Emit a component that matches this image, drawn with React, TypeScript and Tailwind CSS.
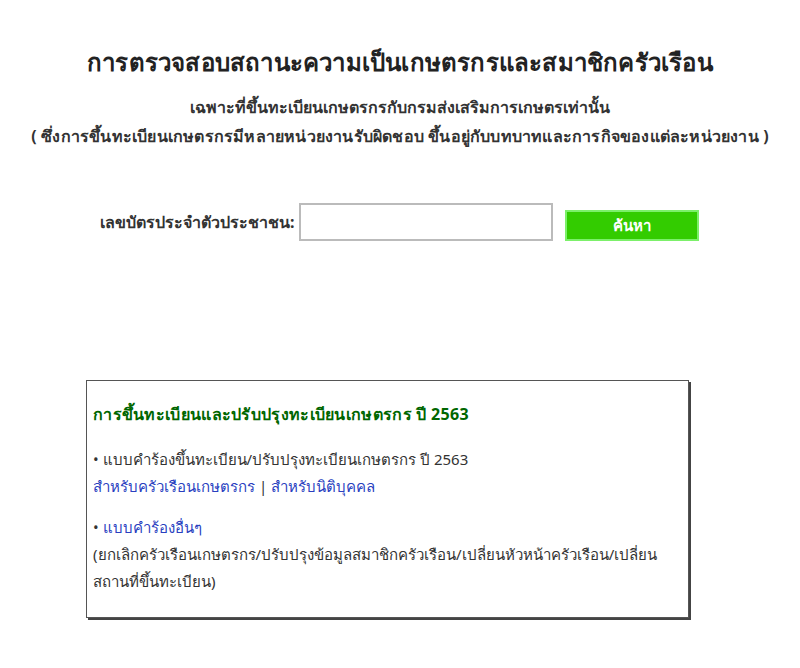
export default function App() {
  return (
    <div className="w-[800px] h-[668px] bg-white text-[#222] font-['Tahoma','Noto_Sans',sans-serif] overflow-hidden">
      <div className="flex flex-col items-center pt-[46px]">
        <h1 className="text-[24px] font-bold leading-[32px] text-[#222] tracking-[0.2px]">
          การตรวจสอบสถานะความเป็นเกษตรกรและสมาชิกครัวเรือน
        </h1>
        <p className="mt-[17px] text-[16px] font-bold leading-[24px] text-[#333]">
          เฉพาะที่ขึ้นทะเบียนเกษตรกรกับกรมส่งเสริมการเกษตรเท่านั้น
        </p>
        <p className="mt-[5px] text-[16px] font-bold leading-[24px] text-[#333] whitespace-nowrap tracking-[0.2px]">
          ( ซึ่งการขึ้นทะเบียนเกษตรกรมีหลายหน่วยงานรับผิดชอบ ขึ้นอยู่กับบทบาทและการกิจของแต่ละหน่วยงาน )
        </p>
      </div>

      <div className="flex items-center mt-[55px] pl-[100px]">
        <span className="text-[16px] font-bold text-[#333] mr-[4px] whitespace-nowrap">เลขบัตรประจำตัวประชาชน:</span>
        <input
          type="text"
          className="w-[254px] h-[38px] border-2 border-[#bbb] bg-white outline-none"
        />
        <button className="ml-[12px] mt-[7px] w-[134px] h-[31px] bg-[#33cc00] border-2 border-[#7cf06a] text-white text-[15px] font-bold leading-none">
          ค้นหา
        </button>
      </div>

      <div className="ml-[86px] mt-[139px] w-[603px] h-[238px] border border-[#555] shadow-[2px_2px_0_#444] px-[6px] pt-[23px]">
        <p className="text-[16px] font-bold text-[#006600] leading-[20px] tracking-[0.3px]">
          การขึ้นทะเบียนและปรับปรุงทะเบียนเกษตรกร ปี 2563
        </p>
        <p className="mt-[22px] text-[15px] text-[#333] leading-[27px]">
          • แบบคำร้องขึ้นทะเบียน/ปรับปรุงทะเบียนเกษตรกร ปี 2563
          <br />
          <a className="text-[#2a3fbf]">สำหรับครัวเรือนเกษตรกร</a>
          <span className="text-[#333]"> | </span>
          <a className="text-[#2a3fbf]">สำหรับนิติบุคคล</a>
        </p>
        <p className="mt-[14px] text-[15px] text-[#333] leading-[27px]">
          • <a className="text-[#2a3fbf]">แบบคำร้องอื่นๆ</a>
          <br />
          <span className="whitespace-nowrap">(ยกเลิกครัวเรือนเกษตรกร/ปรับปรุงข้อมูลสมาชิกครัวเรือน/เปลี่ยนหัวหน้าครัวเรือน/เปลี่ยน</span>
          <br />
          สถานที่ขึ้นทะเบียน)
        </p>
      </div>
    </div>
  )
}
